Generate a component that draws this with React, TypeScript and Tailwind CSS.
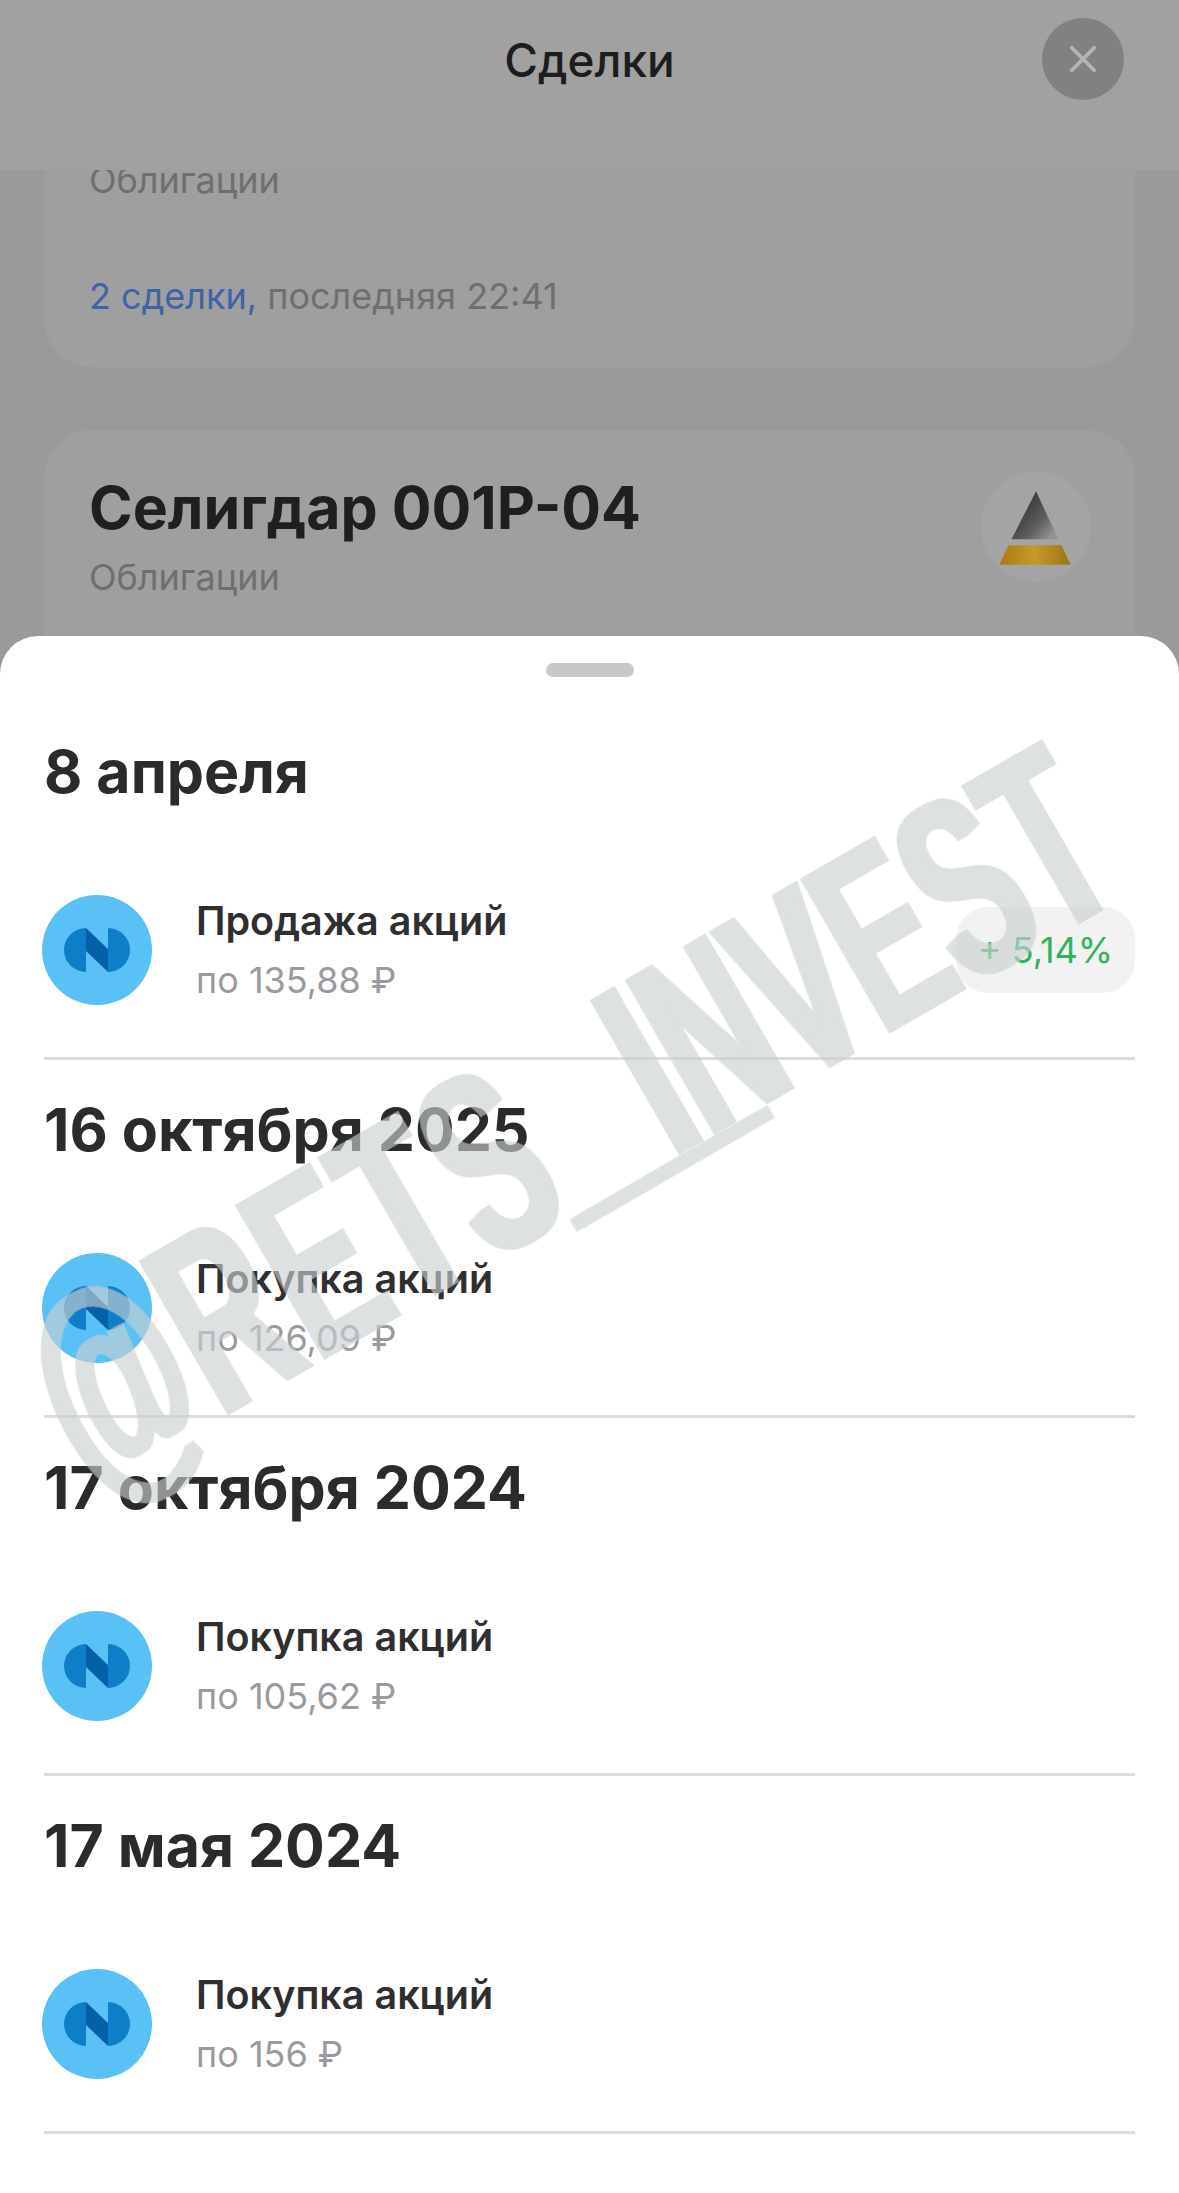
const deals = [
  { date: "8 апреля", title: "Продажа акций", price: "по 135,88 ₽", change: "5,14%" },
  { date: "16 октября 2025", title: "Покупка акций", price: "по 126,09 ₽" },
  { date: "17 октября 2024", title: "Покупка акций", price: "по 105,62 ₽" },
  { date: "17 мая 2024", title: "Покупка акций", price: "по 156 ₽" },
];

function NornickelIcon() {
  return (
    <svg width="110" height="110" viewBox="0 0 110 110" className="shrink-0 -ml-[2px]">
      <circle cx="55" cy="55" r="55" fill="#5ac1f7" />
      <path d="M44 33 A22 22 0 0 0 44 77 Z" fill="#0f7ec9" />
      <path d="M66 33 A22 22 0 0 1 66 77 Z" fill="#0f7ec9" />
      <path d="M44 33 L66 54 L66 77 L44 56 Z" fill="#0560a8" />
    </svg>
  );
}

function SeligdarIcon() {
  return (
    <svg width="110" height="110" viewBox="0 0 108 108" className="shrink-0">
      <defs>
        <linearGradient id="rock" x1="0.2" y1="0.3" x2="0.9" y2="0.9">
          <stop offset="0" stopColor="#3a3a3a" />
          <stop offset="0.55" stopColor="#5c5c5c" />
          <stop offset="1" stopColor="#959595" />
        </linearGradient>
        <linearGradient id="gold" x1="0" y1="0" x2="1" y2="0">
          <stop offset="0" stopColor="#a87a12" />
          <stop offset="0.5" stopColor="#c59a2a" />
          <stop offset="1" stopColor="#9c7414" />
        </linearGradient>
      </defs>
      <circle cx="54" cy="54" r="54" fill="#a4a4a4" />
      <path d="M54 19 L76 66 L30 66 Z" fill="url(#rock)" />
      <path d="M27 72 L79 72 L88 91 L18 91 Z" fill="url(#gold)" />
    </svg>
  );
}

function Backdrop() {
  return (
    <div className="h-[636px] overflow-hidden bg-[#9a9a9a]">
      <header className="relative z-10 flex h-[170px] items-start justify-center bg-[#a1a1a1] pt-[30px]">
        <h1 className="text-[46px] leading-[60px] font-medium text-[#1d1d1d]">Сделки</h1>
        <button className="absolute top-[18px] right-[55px] flex h-[82px] w-[82px] items-center justify-center rounded-full bg-[#808282]">
          <svg width="28" height="28" viewBox="0 0 30 30" fill="none" stroke="#b4b4b4" strokeWidth="4" strokeLinecap="round">
            <path d="M3 3 L27 27 M27 3 L3 27" />
          </svg>
        </button>
      </header>

      <div className="mx-[44px] -mt-[60px] h-[257px] rounded-[48px] bg-[#9f9f9f] px-[45px] pt-[50px]">
        <p className="text-[36px] leading-[40px] text-[#6f6f6f]">Облигации</p>
        <p className="mt-[76px] text-[36px] leading-[40px] text-[#6f6f6f]">
          <span className="text-[#3e63aa]">2 сделки,</span> последняя 22:41
        </p>
      </div>

      <div className="mx-[44px] mt-[63px] h-[300px] rounded-[48px] bg-[#9f9f9f] pr-[44px] pl-[45px]">
        <div className="flex items-start justify-between pt-[42px]">
          <div>
            <h2 className="text-[59px] leading-[72px] font-bold text-[#1f1f1f]">Селигдар 001Р-04</h2>
            <p className="mt-[13px] text-[36px] leading-[40px] text-[#6f6f6f]">Облигации</p>
          </div>
          <SeligdarIcon />
        </div>
      </div>
    </div>
  );
}

function DealSection({ date, title, price, change }: (typeof deals)[number]) {
  return (
    <section className="flex h-[358px] flex-col px-[44px]">
      <h3 className="mt-[36px] text-[59px] leading-[68px] font-bold text-[#2b2b2b]">{date}</h3>
      <div className="mt-[89px] flex items-center">
        <NornickelIcon />
        <div className="ml-[44px]">
          <p className="text-[39.5px] leading-[40px] font-semibold text-[#2f2f2f]">{title}</p>
          <p className="mt-[19px] text-[36px] leading-[40px] text-[#9a9a9f]">{price}</p>
        </div>
        {change && (
          <span className="ml-auto flex h-[86px] w-[179px] items-center justify-center rounded-[32px] bg-[#f2f2f3] text-[36px] text-[#2cb55a]">
            + {change}
          </span>
        )}
      </div>
      <div className="mt-auto h-[3px] bg-[#dcdcde]" />
    </section>
  );
}

export default function App() {
  return (
    <div className="relative h-[2193px] w-[1179px] overflow-hidden bg-[#9a9a9a] font-['Inter','Liberation_Sans',sans-serif]">
      <Backdrop />

      <main className="h-[1557px] rounded-t-[38px] bg-white">
        <div className="flex h-[66px] justify-center pt-[27px]">
          <div className="h-[14px] w-[88px] rounded-full bg-[#c6c8cc]" />
        </div>
        {deals.map((deal) => (
          <DealSection key={deal.date} {...deal} />
        ))}
      </main>

      {/* Watermark lying over the sheet */}
      <div className="pointer-events-none absolute top-[1116px] left-[567px] [transform:translate(-50%,-50%)_rotate(-30deg)_scaleX(0.56)] font-['Liberation_Sans',sans-serif] text-[260px] leading-none font-bold whitespace-nowrap text-[#c9cfd0] opacity-[0.63] [text-shadow:7px_0_0_#c9cfd0,-7px_0_0_#c9cfd0]">
        <span className="tracking-[11px]">@RETS</span>
        <span className="inline-block w-[193px] origin-bottom-left [transform:translateY(-12px)_scale(2.5,1.5)]">_</span>
        INVEST
      </div>
    </div>
  );
}
